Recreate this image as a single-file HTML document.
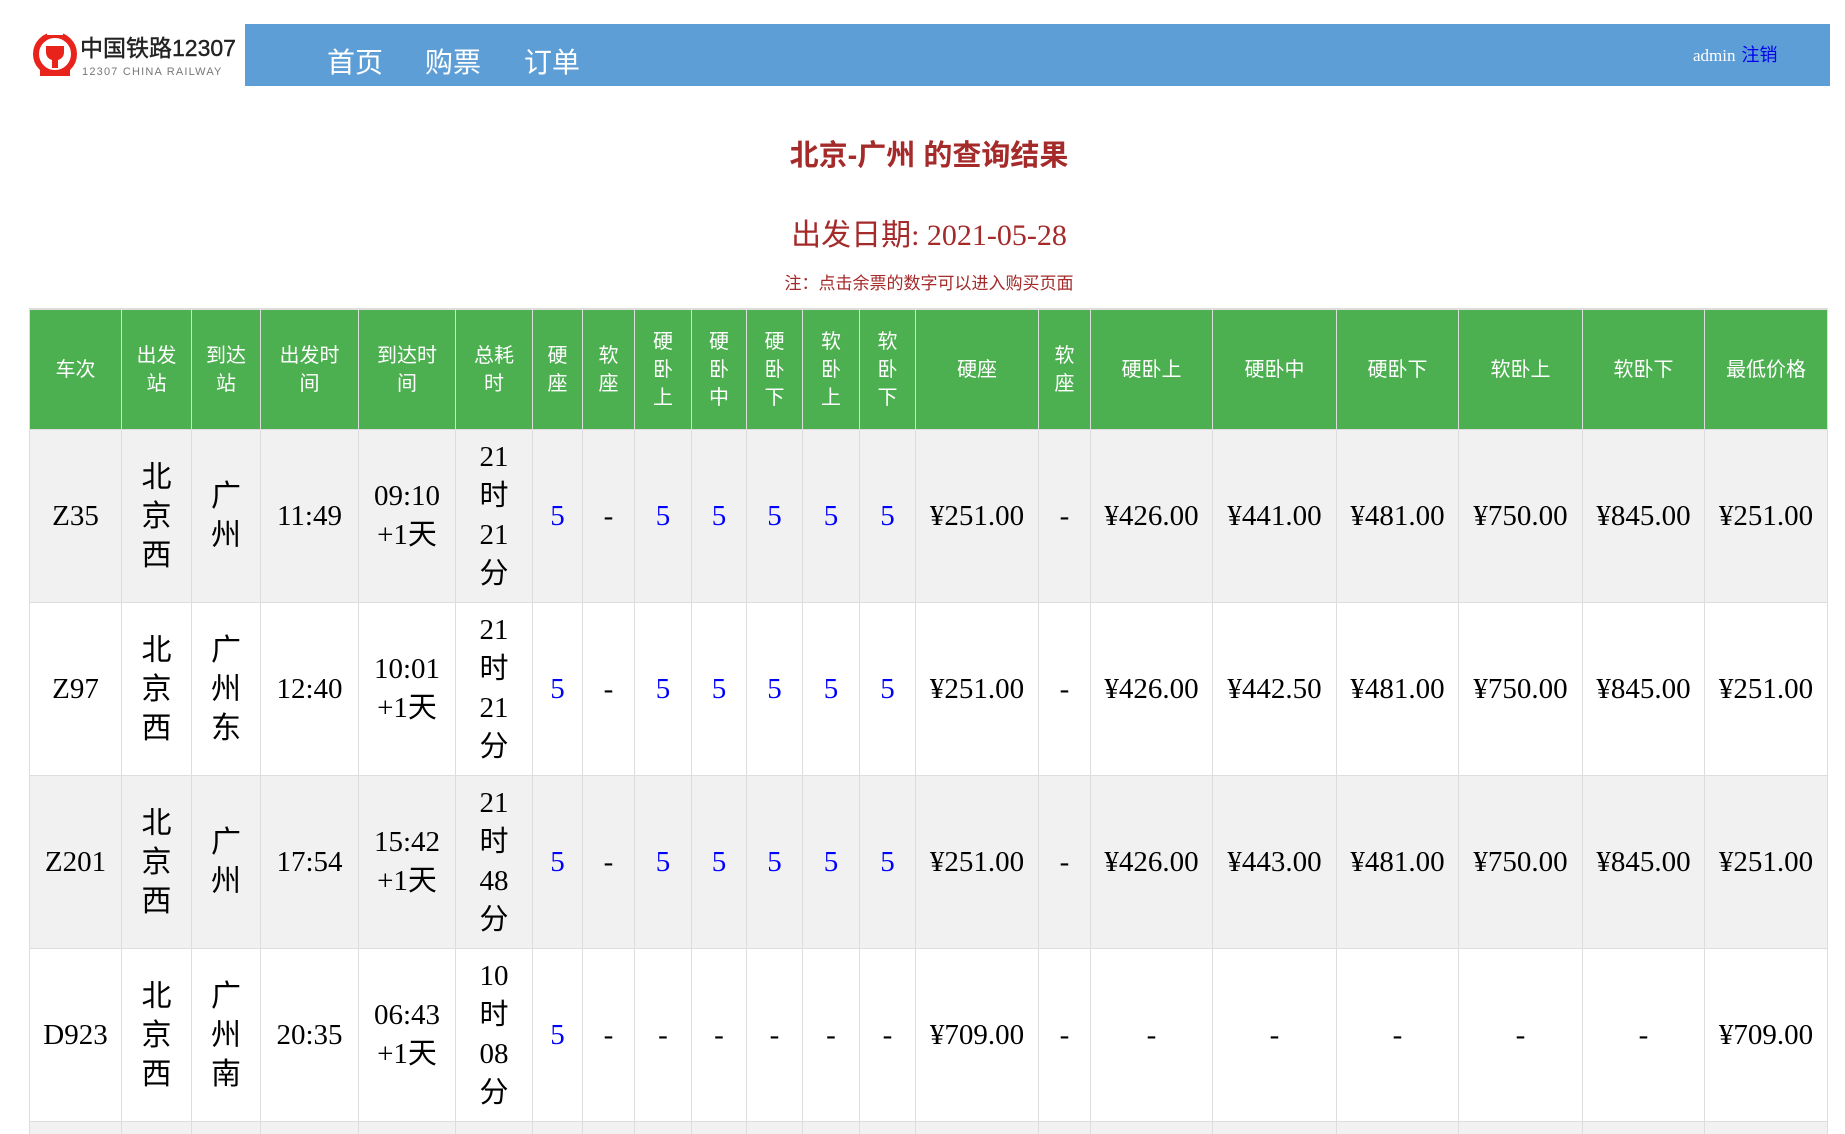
<!DOCTYPE html>
<html><head><meta charset="utf-8"><style>
html,body{margin:0;padding:0;background:#fff;width:1845px;height:1134px;overflow:hidden}
body{font-family:"Liberation Serif","Noto Sans CJK SC",serif;position:relative}
.logo{position:absolute;left:32px;top:26px;width:209px;height:59px}
.nav{position:absolute;left:245px;top:24px;width:1585px;height:62px;background:#5e9ed6}
.nav span.m{position:absolute;top:22px;color:#fff;font-size:28px;font-family:"Liberation Sans","Noto Sans CJK SC",sans-serif;line-height:34px}
.user{position:absolute;left:1448px;top:17px;font-size:17px;color:#fff}
.user b{font-weight:normal;color:#0000ee;font-family:"Liberation Sans","Noto Sans CJK SC",sans-serif;margin-left:6px;font-size:18px}
.c{position:absolute;left:0;width:1858px;text-align:center;color:#a52a2a}
.t1{top:132px;font-size:29px;font-weight:bold;font-family:"Liberation Sans","Noto Sans CJK SC",sans-serif}
.t2{top:210px;font-size:30px}
.t3{top:269px;font-size:17px;font-family:"Liberation Sans","Noto Sans CJK SC",sans-serif}
table{position:absolute;left:29px;top:308px;border-collapse:collapse;table-layout:fixed;width:1799px;border-top:2px solid #ddd}
th{background:#4caf50;color:#fff;font-weight:normal;font-size:20px;line-height:28px;font-family:"Liberation Sans","Noto Sans CJK SC",sans-serif;height:119px;border:1px solid #ddd;padding:0;text-align:center}
td{border:1px solid #ddd;font-size:29px;line-height:39px;text-align:center;padding:0;height:172px;color:#000}
tr.o td{background:#f1f1f1}
tr.e td{background:#fff}
td.b{color:#0000ff}
td.cn{font-family:"Liberation Sans","Noto Sans CJK SC",sans-serif;font-size:30px}
</style></head><body>
<div class="logo">
<svg width="209" height="59" viewBox="0 0 209 59">
<circle cx="23" cy="28" r="19" fill="none" stroke="#e8231b" stroke-width="6"/>
<rect x="15" y="3" width="16" height="6" fill="#fff"/>
<path d="M14 20 h18 v6 q0 6 -6 8 v8 h-6 v-8 q-6 -2 -6 -8z" fill="#e8231b"/>
<rect x="8" y="44" width="30" height="6" fill="#e8231b"/>
<text x="48" y="30" font-family="Liberation Sans,Noto Sans CJK SC,sans-serif" font-size="23" fill="#222" stroke="#222" stroke-width="0.4">中国铁路12307</text>
<text x="50" y="49" font-family="Liberation Sans,sans-serif" font-size="11" fill="#777" letter-spacing="1.2">12307 CHINA RAILWAY</text>
</svg></div>
<div class="nav">
<span class="m" style="left:82px">首页</span>
<span class="m" style="left:180px">购票</span>
<span class="m" style="left:279px">订单</span>
<div class="user">admin<b>注销</b></div>
</div>
<div class="c t1">北京-广州 的查询结果</div>
<div class="c t2">出发日期: 2021-05-28</div>
<div class="c t3">注：点击余票的数字可以进入购买页面</div>
<table>
<colgroup>
<col style="width:92px"><col style="width:70px"><col style="width:69px"><col style="width:98px"><col style="width:97px"><col style="width:77px"><col style="width:50px"><col style="width:52px"><col style="width:57px"><col style="width:55px"><col style="width:56px"><col style="width:57px"><col style="width:56px"><col style="width:123px"><col style="width:52px"><col style="width:122px"><col style="width:124px"><col style="width:122px"><col style="width:124px"><col style="width:122px"><col style="width:123px">
</colgroup>
<tr><th>车次</th><th>出发<br>站</th><th>到达<br>站</th><th>出发时<br>间</th><th>到达时<br>间</th><th>总耗<br>时</th><th>硬<br>座</th><th>软<br>座</th><th>硬<br>卧<br>上</th><th>硬<br>卧<br>中</th><th>硬<br>卧<br>下</th><th>软<br>卧<br>上</th><th>软<br>卧<br>下</th><th>硬座</th><th>软<br>座</th><th>硬卧上</th><th>硬卧中</th><th>硬卧下</th><th>软卧上</th><th>软卧下</th><th>最低价格</th></tr>
<tr class="o"><td>Z35</td><td class="cn">北<br>京<br>西</td><td class="cn">广<br>州</td><td>11:49</td><td>09:10<br>+1天</td><td>21<br>时<br>21<br>分</td><td class="b">5</td><td>-</td><td class="b">5</td><td class="b">5</td><td class="b">5</td><td class="b">5</td><td class="b">5</td><td>¥251.00</td><td>-</td><td>¥426.00</td><td>¥441.00</td><td>¥481.00</td><td>¥750.00</td><td>¥845.00</td><td>¥251.00</td></tr>
<tr class="e"><td>Z97</td><td class="cn">北<br>京<br>西</td><td class="cn">广<br>州<br>东</td><td>12:40</td><td>10:01<br>+1天</td><td>21<br>时<br>21<br>分</td><td class="b">5</td><td>-</td><td class="b">5</td><td class="b">5</td><td class="b">5</td><td class="b">5</td><td class="b">5</td><td>¥251.00</td><td>-</td><td>¥426.00</td><td>¥442.50</td><td>¥481.00</td><td>¥750.00</td><td>¥845.00</td><td>¥251.00</td></tr>
<tr class="o"><td>Z201</td><td class="cn">北<br>京<br>西</td><td class="cn">广<br>州</td><td>17:54</td><td>15:42<br>+1天</td><td>21<br>时<br>48<br>分</td><td class="b">5</td><td>-</td><td class="b">5</td><td class="b">5</td><td class="b">5</td><td class="b">5</td><td class="b">5</td><td>¥251.00</td><td>-</td><td>¥426.00</td><td>¥443.00</td><td>¥481.00</td><td>¥750.00</td><td>¥845.00</td><td>¥251.00</td></tr>
<tr class="e"><td>D923</td><td class="cn">北<br>京<br>西</td><td class="cn">广<br>州<br>南</td><td>20:35</td><td>06:43<br>+1天</td><td>10<br>时<br>08<br>分</td><td class="b">5</td><td>-</td><td>-</td><td>-</td><td>-</td><td>-</td><td>-</td><td>¥709.00</td><td>-</td><td>-</td><td>-</td><td>-</td><td>-</td><td>-</td><td>¥709.00</td></tr>
<tr class="o"><td></td><td></td><td></td><td></td><td></td><td></td><td></td><td></td><td></td><td></td><td></td><td></td><td></td><td></td><td></td><td></td><td></td><td></td><td></td><td></td><td></td></tr>
</table>
</body></html>
